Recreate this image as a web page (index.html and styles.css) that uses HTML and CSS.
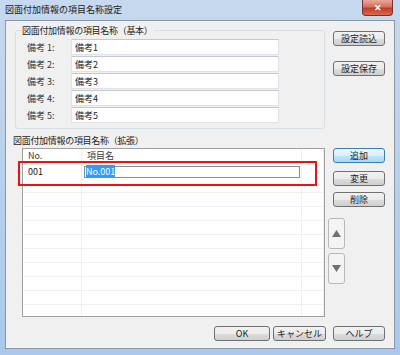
FILE: index.html
```
<!DOCTYPE html>
<html lang="ja">
<head>
    <meta charset="UTF-8">
    <title>図面付加情報の項目名称設定</title>
    <link rel="stylesheet" href="styles.css">
</head>
<body>
<div class="window">
    <div class="titlebar">
        <span class="title">図面付加情報の項目名称設定</span>
        <span class="close">&#x2715;</span>
    </div>
    <div class="client">
        <div class="top-row">
            <fieldset class="group">
                <legend>図面付加情報の項目名称（基本）</legend>
                <div class="field"><label>備考 1:</label><input type="text" value="備考1"></div>
                <div class="field"><label>備考 2:</label><input type="text" value="備考2"></div>
                <div class="field"><label>備考 3:</label><input type="text" value="備考3"></div>
                <div class="field"><label>備考 4:</label><input type="text" value="備考4"></div>
                <div class="field"><label>備考 5:</label><input type="text" value="備考5"></div>
            </fieldset>
            <div class="side">
                <button>設定読込</button>
                <button class="second">設定保存</button>
            </div>
        </div>

        <div class="ext-label">図面付加情報の項目名称（拡張）</div>

        <div class="mid-row">
            <div class="list">
                <div class="rows">
                    <div class="row head">
                        <div class="c1">No.</div>
                        <div class="c2">項目名</div>
                        <div class="c3"></div>
                    </div>
                    <div class="row first">
                        <div class="c1">001</div>
                        <div class="c2"><span class="edit"><span class="sel">No.001</span></span></div>
                        <div class="c3"></div>
                    </div>
                    <div class="row"><div class="c1"></div><div class="c2"></div><div class="c3"></div></div>
                    <div class="row"><div class="c1"></div><div class="c2"></div><div class="c3"></div></div>
                    <div class="row"><div class="c1"></div><div class="c2"></div><div class="c3"></div></div>
                    <div class="row"><div class="c1"></div><div class="c2"></div><div class="c3"></div></div>
                    <div class="row"><div class="c1"></div><div class="c2"></div><div class="c3"></div></div>
                    <div class="row"><div class="c1"></div><div class="c2"></div><div class="c3"></div></div>
                    <div class="row"><div class="c1"></div><div class="c2"></div><div class="c3"></div></div>
                    <div class="row"><div class="c1"></div><div class="c2"></div><div class="c3"></div></div>
                    <div class="row"><div class="c1"></div><div class="c2"></div><div class="c3"></div></div>
                    <div class="row"><div class="c1"></div><div class="c2"></div><div class="c3"></div></div>
                </div>
                <div class="mark"></div>
            </div>
            <div class="side2">
                <button class="default">追加</button>
                <button class="b2">変更</button>
                <button class="b3">削除</button>
                <button class="arrow up"><svg width="9" height="7" viewBox="0 0 9 7"><path d="M4.5 0L9 7H0z" fill="#707070"/></svg></button>
                <button class="arrow down"><svg width="9" height="7" viewBox="0 0 9 7"><path d="M0 0H9L4.5 7z" fill="#707070"/></svg></button>
            </div>
        </div>

        <div class="bottom-row">
            <button class="ok">OK</button>
            <button class="cancel">キャンセル</button>
            <button class="help">ヘルプ</button>
        </div>
    </div>
</div>
</body>
</html>
```
FILE: styles.css
```
body {
    margin: 0;
    font-family: "Noto Sans CJK JP", "Noto Sans", sans-serif;
    font-size: 9px;
    color: #1e1e1e;
}
.window {
    width: 400px;
    height: 355px;
    box-sizing: border-box;
    padding: 0 5px 6px 5px;
    background: linear-gradient(to bottom, #c6d9ee 0%, #bcd2ea 40%, #a9c8ec 100%);
}
.titlebar {
    height: 20px;
    display: flex;
    justify-content: space-between;
    align-items: flex-start;
}
.title {
    font-size: 9px;
    line-height: 20px;
    color: #1a1a1a;
}
.close {
    width: 31px;
    height: 16px;
    margin-right: 2px;
    border: 1px solid #7a3030;
    border-top: none;
    border-radius: 0 0 4px 4px;
    background: linear-gradient(to bottom, #e9a99b 0%, #d4705f 45%, #c23a28 55%, #d66a4f 100%);
    color: #fff;
    font-size: 9px;
    font-weight: bold;
    text-align: center;
    line-height: 15px;
    box-sizing: border-box;
}
.client {
    height: 329px;
    box-sizing: border-box;
    border: 1px solid #8a98a8;
    background-color: #f0f0f0;
    overflow: hidden;
}
.top-row {
    display: flex;
    margin: 3px 0 0 9px;
}
.group {
    width: 310px;
    height: 105px;
    box-sizing: border-box;
    margin: 0;
    padding: 0 0 0 11px;
    border: 1px solid #d5dfe5;
    border-radius: 3px;
    min-width: 0;
}
.group legend {
    padding: 0 1px;
    margin-left: -6px;
    line-height: 13px;
    letter-spacing: -0.3px;
}
.field {
    display: flex;
    align-items: center;
    height: 16px;
    margin-top: 1px;
}
.field:first-of-type {
    margin-top: 2px;
}
.field label {
    width: 44px;
    color: #333;
}
.field input {
    width: 208px;
    height: 16px;
    box-sizing: border-box;
    margin: 0;
    padding: 0 0 0 3px;
    border: 1px solid #dfe3e8;
    border-top-color: #c5c9ce;
    font-family: inherit;
    font-size: 9px;
    color: #222;
    background: #fff;
}
button {
    height: 15px;
    padding: 0;
    box-sizing: border-box;
    border: 1px solid #707070;
    border-radius: 3px;
    background: linear-gradient(to bottom, #f2f2f2 0%, #ebebeb 50%, #dddddd 51%, #cfcfcf 100%);
    font-family: inherit;
    font-size: 9px;
    line-height: 13px;
    color: #1e1e1e;
}
.side {
    display: flex;
    flex-direction: column;
    margin-left: 8px;
    padding-top: 7px;
}
.side button {
    width: 52px;
}
.side .second {
    margin-top: 15px;
}
.ext-label {
    margin: 5px 0 0 7px;
    height: 13px;
    line-height: 13px;
    letter-spacing: -0.3px;
}
.mid-row {
    display: flex;
    margin-top: 1px;
}
.list {
    position: relative;
    width: 303px;
    height: 169px;
    box-sizing: border-box;
    margin-left: 16px;
    border: 1px solid #a0a0a0;
    background: #fff;
}
.rows {
    height: 100%;
    overflow: hidden;
}
.row {
    display: flex;
    height: 13px;
    border-bottom: 1px solid #f0f0f0;
}
.row > div {
    border-right: 1px solid #f0f0f0;
    line-height: 13px;
}
.c1 {
    width: 59px;
    padding-left: 5px;
    box-sizing: border-box;
}
.c2 {
    width: 220px;
    padding-left: 5px;
    box-sizing: border-box;
}
.c3 {
    flex: 1;
}
.row.head {
    height: 13px;
    border-bottom: none;
}
.row.head > div {
    color: #3a3a3a;
}
.row.first {
    height: 30px;
    align-items: stretch;
}
.row.first > div {
    line-height: 20px;
}
.row.first .c2 {
    padding: 4px 0 0 2px;
}
.edit {
    display: block;
    width: 216px;
    height: 12px;
    box-sizing: border-box;
    border: 1px solid #8c8c8c;
    background: #fff;
    line-height: 10px;
    padding-left: 1px;
}
.sel {
    background: #3399ff;
    color: #fff;
}
.mark {
    position: absolute;
    left: -5px;
    top: 12px;
    width: 299px;
    height: 25px;
    box-sizing: border-box;
    border: 2px solid #ee1111;
}
.side2 {
    display: flex;
    flex-direction: column;
    align-items: flex-start;
    margin-left: 3px;
}
.side2 button {
    width: 52px;
    margin-left: 5px;
}
.side2 .default {
    border-color: #3c7fb1;
    background: linear-gradient(to bottom, #eaf6fd 0%, #d9f0fc 50%, #bee6fd 51%, #a7d9f5 100%);
}
.side2 .b2 {
    margin-top: 8px;
}
.side2 .b3 {
    margin-top: 6px;
}
.side2 .arrow {
    width: 17px;
    height: 31px;
    margin-left: 0;
    border-color: #b8b8b8;
    background: #f4f4f4;
    display: flex;
    align-items: center;
    justify-content: center;
}
.side2 .up {
    margin-top: 11px;
}
.side2 .down {
    margin-top: 4px;
}
.bottom-row {
    display: flex;
    justify-content: flex-end;
    margin-top: 9px;
    padding-right: 9px;
}
.bottom-row .ok {
    width: 56px;
}
.bottom-row .cancel {
    width: 53px;
    margin-left: 3px;
}
.bottom-row .help {
    width: 52px;
    margin-left: 7px;
}
```
